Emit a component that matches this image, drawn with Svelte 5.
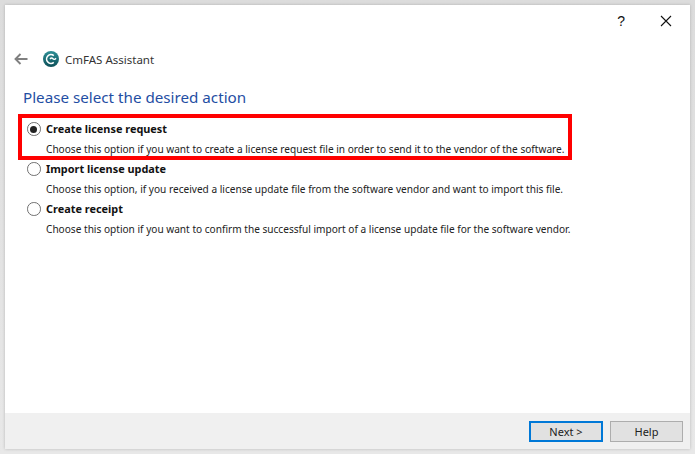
<script>
  const options = [
    { title: 'Create license request', text: 'Choose this option if you want to create a license request file in order to send it to the vendor of the software.', checked: true },
    { title: 'Import license update', text: 'Choose this option, if you received a license update file from the software vendor and want to import this file.', checked: false },
    { title: 'Create receipt', text: 'Choose this option if you want to confirm the successful import of a license update file for the software vendor.', checked: false }
  ];
</script>

<div class="page">
  <div class="window">
    <div class="titlebar">
      <span class="help">?</span>
      <svg class="close" width="12" height="12" viewBox="0 0 12 12"><path d="M1 1 L11 11 M11 1 L1 11" stroke="#111" stroke-width="1.1" fill="none"/></svg>
    </div>
    <div class="header">
      <svg class="back" width="14" height="12" viewBox="0 0 14 12"><path d="M13.5 6 H1.5 M6.5 1 L1.5 6 L6.5 11" stroke="#808080" stroke-width="1.9" fill="none"/></svg>
      <svg class="logo" width="16" height="16" viewBox="0 0 16 16">
        <defs><linearGradient id="g" x1="0" y1="0" x2="0" y2="1"><stop offset="0" stop-color="#2d8f96"/><stop offset="1" stop-color="#0d4f58"/></linearGradient></defs>
        <circle cx="8" cy="8" r="8" fill="url(#g)"/>
        <path d="M10.8 4.6 A4.4 4.4 0 1 0 10.8 11.4" stroke="#fff" stroke-width="1.6" fill="none"/>
        <path d="M7 8 Q8.6 6.2 10 7.8 Q11.2 9.2 13 7.2" stroke="#fff" stroke-width="1.4" fill="none"/>
      </svg>
      <span class="app">CmFAS Assistant</span>
    </div>
    <main class="content">
      <h1>Please select the desired action</h1>
      <div class="list">
        <div class="marker"></div>
        {#each options as o}
          <div class="option">
            <div class="row">
              <span class="radio" class:on={o.checked}></span>
              <span class="title">{o.title}</span>
            </div>
            <p>{o.text}</p>
          </div>
        {/each}
      </div>
    </main>
    <footer>
      <button class="primary">Next &gt;</button>
      <button>Help</button>
    </footer>
  </div>
</div>

<style>
  :global(body) { margin: 0; background: #fff; }
  .page {
    width: 695px; height: 454px; box-sizing: border-box; padding: 5px;
    background: linear-gradient(#dcdcdc, #e8e8e8);
    overflow: hidden;
  }
  .window {
    width: 685px; height: 444px; background: #fff; display: flex; flex-direction: column;
    box-shadow: 0 0 3px rgba(0,0,0,.2);
    font-family: "Noto Sans", "Open Sans", sans-serif;
  }
  .titlebar { height: 32px; display: flex; align-items: center; justify-content: flex-end; padding-right: 18px; gap: 35px; flex: none; }
  .help { font: 14px "Liberation Sans", sans-serif; color: #111; }
  .header { height: 24px; margin-top: 10px; display: flex; align-items: center; padding-left: 9px; flex: none; }
  .back { margin-right: 15px; }
  .logo { margin-right: 6px; }
  .app { font-size: 11.5px; color: #333; }
  .content { flex: 1; padding: 16px 18px 0; min-height: 0; }
  h1 { margin: 0 0 12px; font-size: 15.2px; line-height: 20px; font-weight: 400; color: #1f4ea3; }
  .list { position: relative; padding-left: 4px; }
  .marker { position: absolute; left: -5px; top: -5px; width: 546px; height: 38px; border: 4px solid #f00; pointer-events: none; }
  .option { height: 40px; }
  .row { display: flex; align-items: center; height: 20px; }
  .radio { width: 11.5px; height: 11.5px; border: 1px solid #6f6f6f; border-radius: 50%; margin-right: 5.5px; position: relative; flex: none; background: #fff; }
  .radio.on::after { content: ""; position: absolute; left: 2.25px; top: 2.25px; width: 7px; height: 7px; border-radius: 50%; background: #222; }
  .title { font: 700 10.9px/20px "Noto Sans", sans-serif; color: #111; }
  p { margin: 0 0 0 19px; font: 400 10.1px/20px "Noto Sans", sans-serif; color: #222; white-space: nowrap; }
  footer { height: 36px; background: #f0f0f0; display: flex; justify-content: flex-end; align-items: center; gap: 7px; padding-right: 7px; flex: none; }
  button { width: 73px; height: 21px; padding: 0; border: 1px solid #adadad; background: #e1e1e1; font: 11px "Noto Sans", sans-serif; color: #222; }
  .primary { width: 74px; border: 2px solid #0078d7; }
</style>
